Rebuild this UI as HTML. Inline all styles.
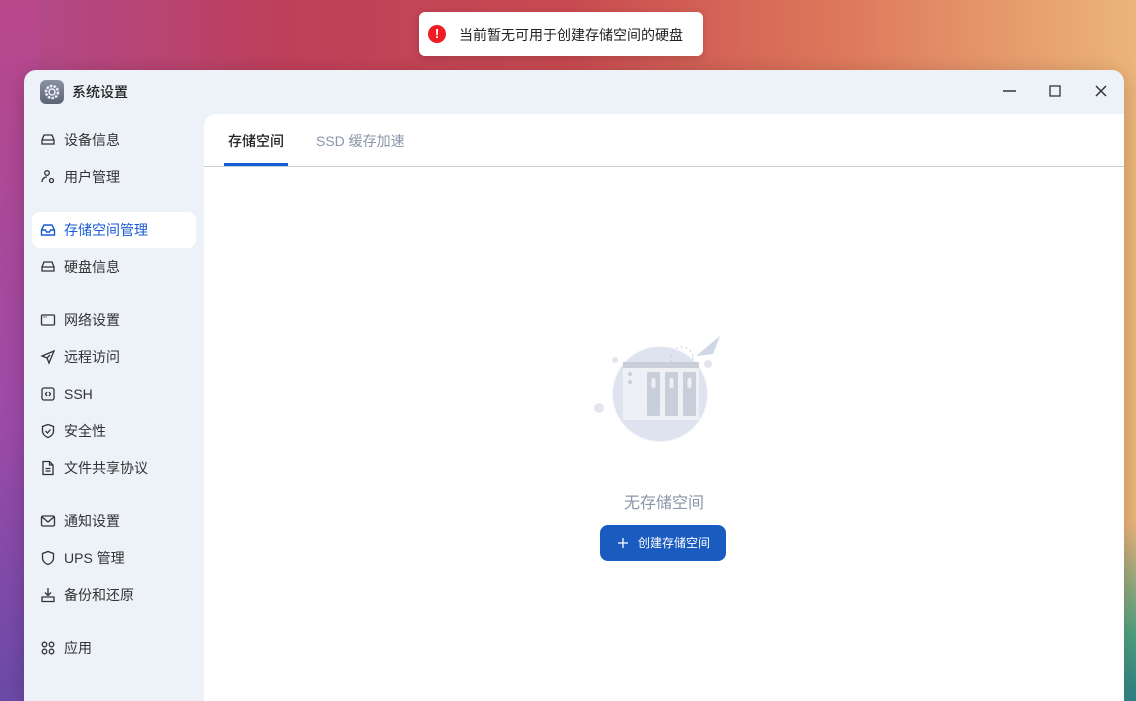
<!DOCTYPE html>
<html><head><meta charset="utf-8"><style>
*{margin:0;padding:0;box-sizing:border-box}
html,body{width:1136px;height:701px;overflow:hidden}
body{position:relative;font-family:"Liberation Sans","Noto Sans CJK SC",sans-serif;
background:
radial-gradient(ellipse 120px 200px at 1150px 720px,#1f6f8a 0%,rgba(60,160,130,.9) 45%,rgba(200,210,130,0) 100%),
linear-gradient(90deg,#b04a8f 0%,#be3f5a 25%,#c84a50 50%,#de7a5c 75%,#ecb57a 100%);}
.bgl{position:absolute;left:0;top:0;width:40px;height:701px;background:linear-gradient(180deg,#b9488a,#9d4aa8 60%,#6a4aa8)}
.win{position:absolute;left:24px;top:70px;width:1100px;height:631px;background:#edf1f8;border-radius:12px 12px 0 0;box-shadow:0 4px 20px rgba(0,0,0,.2)}
.title{position:absolute;top:82px;font-size:14px;color:#222;font-weight:500}
.appic{position:absolute;left:40px;top:80px;width:24px;height:24px;border-radius:6px;background:linear-gradient(#8a93a3,#5b6473)}
.content{position:absolute;left:204px;top:114px;width:920px;height:587px;background:#fff;border-radius:12px 0 0 0}
.tabs{position:absolute;left:0;top:0;width:920px;height:53px;border-bottom:1px solid #c9d0da}
.tab{position:absolute;top:17px;font-size:14px}
.item{position:absolute;left:32px;width:164px;height:36px;border-radius:8px;font-size:14px;color:#333;line-height:36px;padding-left:32px}
.item svg{position:absolute;left:8px;top:10px}
.item.act{background:#fff;color:#1a5bd6}
.ctl{position:absolute;top:83px}
</style></head><body>
<div class="bgl"></div>
<div style="position:absolute;left:419px;top:12px;width:284px;height:44px;background:#fff;border-radius:6px;box-shadow:0 2px 8px rgba(0,0,0,.15)">
<div style="position:absolute;left:9px;top:13px;width:18px;height:18px;border-radius:50%;background:#ee1c25;color:#fff;font-size:13px;font-weight:bold;text-align:center;line-height:18px">!</div>
<div style="position:absolute;left:40px;top:13px;font-size:14px;color:#222">当前暂无可用于创建存储空间的硬盘</div></div>
<div class="win"></div>
<div class="appic"><svg width="24" height="24" viewBox="0 0 24 24"><circle cx="12" cy="12" r="6" fill="none" stroke="#eef" stroke-width="2.5" stroke-dasharray="2.5 1.2"/><circle cx="12" cy="12" r="3" fill="none" stroke="#eef" stroke-width="1.5"/></svg></div>
<div class="title" style="left:72px">系统设置</div>
<svg class="ctl" style="left:1002px" width="16" height="16"><line x1="1" y1="8" x2="14" y2="8" stroke="#333" stroke-width="1.5"/></svg>
<svg class="ctl" style="left:1048px" width="16" height="16"><rect x="2" y="3" width="10" height="10" fill="none" stroke="#333" stroke-width="1.3"/></svg>
<svg class="ctl" style="left:1094px" width="16" height="16"><path d="M2 3L12 13M12 3L2 13" stroke="#333" stroke-width="1.5"/></svg>

<div class="item" style="top:122px"><svg width="16" height="16" fill="none" stroke="#333" stroke-width="1.3"><path d="M2 8L4 3h8l2 5v4H2z M2 8h12"/></svg>设备信息</div>
<div class="item" style="top:159px"><svg width="16" height="16" fill="none" stroke="#333" stroke-width="1.3"><circle cx="7" cy="4" r="2.3"/><path d="M2 13c0-3 2-5 5-5"/><circle cx="11.5" cy="11.5" r="2"/></svg>用户管理</div>
<div class="item act" style="top:212px"><svg width="16" height="16" fill="none" stroke="#1a5bd6" stroke-width="1.4"><path d="M1.5 8L4 3h8l2.5 5v5h-13z M1.5 8h4l1 2h3l1-2h4"/></svg>存储空间管理</div>
<div class="item" style="top:249px"><svg width="16" height="16" fill="none" stroke="#333" stroke-width="1.3"><path d="M2 8L4 3h8l2 5v4H2z M2 8h12"/></svg>硬盘信息</div>
<div class="item" style="top:302px"><svg width="16" height="16" fill="none" stroke="#333" stroke-width="1.3"><rect x="1.5" y="3" width="13" height="10" rx="1"/><path d="M3.5 5h3" stroke-dasharray="1 1"/></svg>网络设置</div>
<div class="item" style="top:339px"><svg width="16" height="16" fill="none" stroke="#333" stroke-width="1.3"><path d="M14 2L2 7l5 2 2 5z M7 9l3-3"/></svg>远程访问</div>
<div class="item" style="top:376px"><svg width="16" height="16" fill="none" stroke="#333" stroke-width="1.3"><rect x="2" y="2" width="12" height="12" rx="2"/><path d="M7 6L5.5 8 7 10M9 6l1.5 2L9 10"/></svg>SSH</div>
<div class="item" style="top:413px"><svg width="16" height="16" fill="none" stroke="#333" stroke-width="1.3"><path d="M8 1.5l5.5 2v4.5c0 3-2.5 5.5-5.5 6.5-3-1-5.5-3.5-5.5-6.5V3.5z M5.5 8l2 2 3-3.5"/></svg>安全性</div>
<div class="item" style="top:450px"><svg width="16" height="16" fill="none" stroke="#333" stroke-width="1.3"><path d="M3 1.5h6.5l3.5 3.5v9.5H3z M9.5 1.5V5H13 M5.5 8.5h5M5.5 11h5"/></svg>文件共享协议</div>
<div class="item" style="top:503px"><svg width="16" height="16" fill="none" stroke="#333" stroke-width="1.3"><rect x="1.5" y="3" width="13" height="10" rx="1.5"/><path d="M2 4l6 5 6-5"/></svg>通知设置</div>
<div class="item" style="top:540px"><svg width="16" height="16" fill="none" stroke="#333" stroke-width="1.3"><path d="M8 1.5l5.5 2v4.5c0 3-2.5 5.5-5.5 6.5-3-1-5.5-3.5-5.5-6.5V3.5z"/></svg>UPS 管理</div>
<div class="item" style="top:577px"><svg width="16" height="16" fill="none" stroke="#333" stroke-width="1.3"><path d="M8 1v7M5 5.5l3 3 3-3 M2 10h12v4.5H2z"/></svg>备份和还原</div>
<div class="item" style="top:630px"><svg width="16" height="16" fill="none" stroke="#333" stroke-width="1.3"><circle cx="4.5" cy="4.5" r="2.3"/><circle cx="11.5" cy="4.5" r="2.3"/><circle cx="4.5" cy="11.5" r="2.3"/><circle cx="11.5" cy="11.5" r="2.3"/></svg>应用</div>

<div class="content">
<div class="tabs">
<div class="tab" style="left:24px;color:#222;font-weight:500">存储空间</div>
<div style="position:absolute;left:20px;top:49px;width:64px;height:3px;background:#1a5bd6"></div>
<div class="tab" style="left:112px;color:#8a96a8">SSD 缓存加速</div>
</div>
<svg style="position:absolute;left:386px;top:218px" width="140" height="130" viewBox="0 0 140 130">
<circle cx="70" cy="62" r="48" fill="#f3f5fa"/>
<circle cx="70" cy="62" r="47" fill="#dfe3ef"/>
<circle cx="25" cy="28" r="3" fill="#e3e6ef"/>
<circle cx="9" cy="76" r="5" fill="#e3e6ef"/>
<circle cx="118" cy="32" r="4" fill="#e3e6ef"/>
<path d="M106 24l24-20-7 18z" fill="#cfd6e6"/>
<circle cx="92" cy="26" r="11" fill="none" stroke="#c5ccdb" stroke-dasharray="2 3"/>
<rect x="33" y="30" width="76" height="58" fill="#eef0f5"/>
<rect x="33" y="30" width="76" height="6" fill="#c9cedb"/>
<circle cx="40" cy="42" r="2" fill="#c9cedb"/><circle cx="40" cy="50" r="2" fill="#c9cedb"/>
<rect x="57" y="40" width="13" height="44" rx="1" fill="#c9cedb"/>
<rect x="75" y="40" width="13" height="44" rx="1" fill="#c9cedb"/>
<rect x="93" y="40" width="13" height="44" rx="1" fill="#c9cedb"/>
<rect x="61.5" y="46" width="4" height="10" rx="2" fill="#eef0f5"/>
<rect x="79.5" y="46" width="4" height="10" rx="2" fill="#eef0f5"/>
<rect x="97.5" y="46" width="4" height="10" rx="2" fill="#eef0f5"/>
</svg>
<div style="position:absolute;left:0;width:920px;top:375px;text-align:center;font-size:16px;color:#8a96a8">无存储空间</div>
<div style="position:absolute;left:396px;top:411px;width:126px;height:36px;border-radius:8px;background:#1a5bbf;color:#fff;font-size:12px;line-height:36px;padding-left:38px">创建存储空间
<svg style="position:absolute;left:17px;top:12px" width="12" height="12"><path d="M6 1v10M1 6h10" stroke="#fff" stroke-width="1.3"/></svg></div>
</div>
</body></html>
